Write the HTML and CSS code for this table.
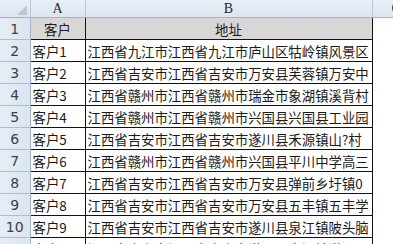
FILE: index.html
```html
<!DOCTYPE html>
<html lang="zh">
<head>
<meta charset="utf-8">
<link rel="stylesheet" href="styles.css">
</head>
<body>
<table class="sheet">
  <colgroup>
    <col class="c-rh"><col class="c-a"><col class="c-b"><col class="c-c">
  </colgroup>
  <tr class="hdr">
    <th class="corner"><span class="tri"></span></th>
    <th>A</th>
    <th>B</th>
    <th class="colc">C</th>
  </tr>
  <tr class="r-title">
    <th class="rn">1</th>
    <td class="ctr">客户</td>
    <td class="ctr">地址</td>
    <td class="empty"></td>
  </tr>
  <tr><th class="rn">2</th><td>客户1</td><td>江西省九江市江西省九江市庐山区牯岭镇风景区</td><td class="empty"></td></tr>
  <tr><th class="rn">3</th><td>客户2</td><td>江西省吉安市江西省吉安市万安县芙蓉镇万安中</td><td class="empty"></td></tr>
  <tr><th class="rn">4</th><td>客户3</td><td>江西省赣州市江西省赣州市瑞金市象湖镇溪背村</td><td class="empty"></td></tr>
  <tr><th class="rn">5</th><td>客户4</td><td>江西省赣州市江西省赣州市兴国县兴国县工业园</td><td class="empty"></td></tr>
  <tr><th class="rn">6</th><td>客户5</td><td>江西省吉安市江西省吉安市遂川县禾源镇山?村</td><td class="empty"></td></tr>
  <tr><th class="rn">7</th><td>客户6</td><td>江西省赣州市江西省赣州市兴国县平川中学高三</td><td class="empty"></td></tr>
  <tr><th class="rn">8</th><td>客户7</td><td>江西省吉安市江西省吉安市万安县弹前乡圩镇0</td><td class="empty"></td></tr>
  <tr><th class="rn">9</th><td>客户8</td><td>江西省吉安市江西省吉安市万安县五丰镇五丰学</td><td class="empty"></td></tr>
  <tr><th class="rn">10</th><td>客户9</td><td>江西省吉安市江西省吉安市遂川县泉江镇陂头脑</td><td class="empty"></td></tr>
  <tr><th class="rn">11</th><td>客户10</td><td>江西省吉安市江西省吉安市遂川县泉江镇遂川县</td><td class="empty"></td></tr>
</table>
</body>
</html>
```
FILE: styles.css
```css
html, body {
  margin: 0;
  padding: 0;
  background: #ffffff;
  overflow: hidden;
  width: 393px;
  height: 244px;
}

.sheet {
  border-collapse: collapse;
  table-layout: fixed;
  width: 420px;
  font-family: "Noto Sans CJK SC", sans-serif;
  font-size: 13.4px;
  color: #1a1a1a;
}

.c-rh { width: 30px; }
.c-a { width: 55px; }
.c-b { width: 287px; }
.c-c { width: 48px; }

.sheet th,
.sheet td {
  padding: 0;
  overflow: hidden;
  white-space: nowrap;
  font-weight: normal;
}

.hdr th {
  height: 17px;
  background: linear-gradient(#e9eff7, #dce5f0);
  border-right: 1px solid #b8c9dc;
  border-bottom: 1px solid #9fb3c9;
  font-family: "Liberation Serif", serif;
  font-size: 14px;
  color: #2a2a2a;
  line-height: 16px;
  text-align: center;
}

.hdr .colc {
  text-align: left;
  padding-left: 19px;
}

.corner {
  position: relative;
}

.tri {
  position: absolute;
  right: 3px;
  bottom: 2px;
  width: 0;
  height: 0;
  border-left: 10px solid transparent;
  border-bottom: 10px solid #c3c8ce;
}

.rn {
  height: 21px;
  background: linear-gradient(90deg, #e6edf6, #dbe4ef);
  border-bottom: 1px solid #a9bdd3;
  border-right: 1px solid #9fb3c9;
  font-family: "DejaVu Sans", sans-serif;
  font-size: 14px;
  color: #3a3f47;
  text-align: center;
  vertical-align: middle;
  line-height: 20px;
  padding-top: 2px;
}

.sheet td {
  border: 1px solid #111111;
  padding-left: 2px;
  vertical-align: middle;
  line-height: 20px;
}

.sheet td.ctr {
  text-align: center;
  padding-left: 0;
}

.r-title td.ctr {
  background: #d8d6d6;
}

.sheet td.empty {
  border: none;
  border-left: 1px solid #111111;
  background: #ffffff;
}
```
